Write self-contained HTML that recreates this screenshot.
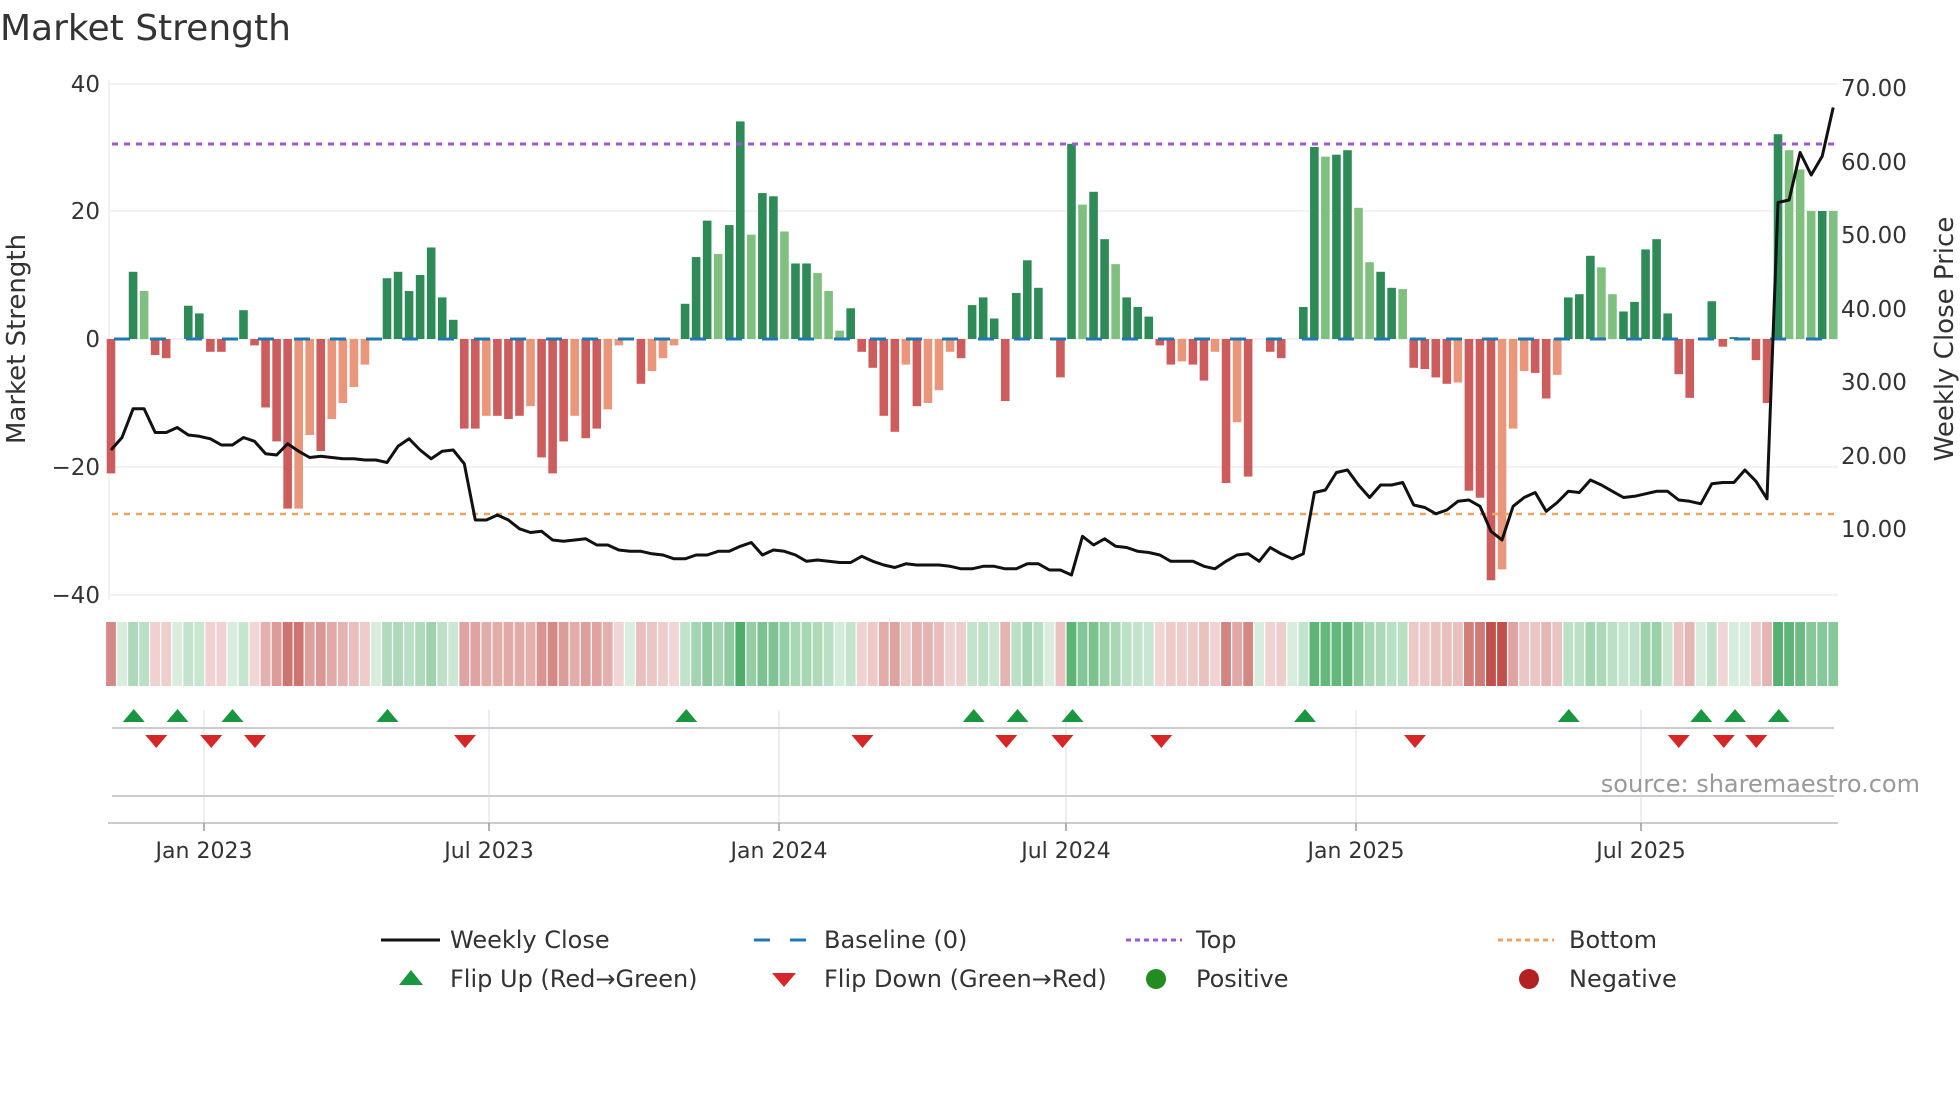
<!DOCTYPE html>
<html><head><meta charset="utf-8"><style>
html,body{margin:0;padding:0;background:#fff;width:1960px;height:1102px;overflow:hidden}
svg text{font-family:"DejaVu Sans","Liberation Sans",sans-serif;fill:#333}
</style></head><body>
<svg id="s" width="1960" height="1102" viewBox="0 0 1960 1102" xmlns="http://www.w3.org/2000/svg">
<text x="0" y="40" font-size="36">Market Strength</text>
<g stroke="#eeeeee" stroke-width="1.5">
<line x1="109" y1="84" x2="1838" y2="84"/><line x1="109" y1="211" x2="1838" y2="211"/>
<line x1="109" y1="339" x2="1838" y2="339"/><line x1="109" y1="467" x2="1838" y2="467"/>
<line x1="109" y1="595" x2="1838" y2="595"/>
</g>
<line x1="109" y1="80" x2="109" y2="600" stroke="#eee" stroke-width="1.5"/>
<g font-size="23" text-anchor="end">
<text x="100" y="92">40</text><text x="100" y="219">20</text><text x="100" y="347">0</text>
<text x="100" y="475">−20</text><text x="100" y="603">−40</text>
</g>
<g font-size="23">
<text x="1841" y="96">70.00</text><text x="1841" y="170">60.00</text><text x="1841" y="243">50.00</text>
<text x="1841" y="317">40.00</text><text x="1841" y="390">30.00</text><text x="1841" y="464">20.00</text>
<text x="1841" y="537">10.00</text>
</g>
<text font-size="26" text-anchor="middle" transform="translate(25,339) rotate(-90)">Market Strength</text>
<text font-size="26" text-anchor="middle" transform="translate(1953,339) rotate(-90)">Weekly Close Price</text>
<g id="bars"></g>
<line x1="114" y1="339" x2="1838" y2="339" stroke="#1f77b4" stroke-width="3" stroke-dasharray="16 20"/>
<line x1="112" y1="144" x2="1836" y2="144" stroke="#9b59d6" stroke-width="3" stroke-dasharray="6 6"/>
<line x1="112" y1="514" x2="1836" y2="514" stroke="#f0a35e" stroke-width="2.5" stroke-dasharray="6 6"/>
<polyline id="price" fill="none" stroke="#111" stroke-width="3" stroke-linejoin="round"/>
<g id="strip"></g>
<g stroke="#e8e8ee" stroke-width="1.5">
<line x1="204" y1="710" x2="204" y2="823"/><line x1="489" y1="710" x2="489" y2="823"/>
<line x1="779" y1="710" x2="779" y2="823"/><line x1="1066" y1="710" x2="1066" y2="823"/>
<line x1="1356" y1="710" x2="1356" y2="823"/><line x1="1641" y1="710" x2="1641" y2="823"/>
</g>
<line x1="112" y1="728" x2="1834" y2="728" stroke="#ccc" stroke-width="2"/>
<line x1="112" y1="796" x2="1834" y2="796" stroke="#ccc" stroke-width="2"/>
<line x1="108" y1="823" x2="1838" y2="823" stroke="#ccc" stroke-width="2"/>
<g stroke="#999" stroke-width="1.5">
<line x1="204" y1="823" x2="204" y2="831"/><line x1="489" y1="823" x2="489" y2="831"/>
<line x1="779" y1="823" x2="779" y2="831"/><line x1="1066" y1="823" x2="1066" y2="831"/>
<line x1="1356" y1="823" x2="1356" y2="831"/><line x1="1641" y1="823" x2="1641" y2="831"/>
</g>
<g id="flips"></g>
<text x="1920" y="792" font-size="24" text-anchor="end" style="fill:#999">source: sharemaestro.com</text>
<g font-size="22" text-anchor="middle">
<text x="204" y="858">Jan 2023</text><text x="489" y="858">Jul 2023</text><text x="779" y="858">Jan 2024</text>
<text x="1066" y="858">Jul 2024</text><text x="1356" y="858">Jan 2025</text><text x="1641" y="858">Jul 2025</text>
</g>
<g font-size="24">
<line x1="381" y1="940" x2="440" y2="940" stroke="#111" stroke-width="3"/>
<text x="450" y="948">Weekly Close</text>
<line x1="754" y1="940" x2="812" y2="940" stroke="#1f77b4" stroke-width="3" stroke-dasharray="16 20"/>
<text x="824" y="948">Baseline (0)</text>
<line x1="1126" y1="940" x2="1182" y2="940" stroke="#9b59d6" stroke-width="3" stroke-dasharray="5 4"/>
<text x="1196" y="948">Top</text>
<line x1="1498" y1="940" x2="1554" y2="940" stroke="#f0a35e" stroke-width="3" stroke-dasharray="5 4"/>
<text x="1569" y="948">Bottom</text>
<polygon points="399,985 411,970 423,985" fill="#1a9641"/>
<text x="450" y="987">Flip Up (Red→Green)</text>
<polygon points="772,973 796,973 784,987" fill="#d62728"/>
<text x="824" y="987">Flip Down (Green→Red)</text>
<circle cx="1156" cy="979" r="10" fill="#228b22"/>
<text x="1196" y="987">Positive</text>
<circle cx="1529" cy="979" r="10" fill="#b22222"/>
<text x="1569" y="987">Negative</text>
</g>
</svg>
<script>
var V=[-21,0,10.5,7.5,-2.5,-3,0,5.2,4,-2,-2,0,4.5,-1,-10.7,-16,-26.5,-26.5,-15,-17.5,-12.5,-10,-7.5,-4,0,9.5,10.5,7.5,10,14.3,6.5,3,
-14,-14,-12,-12,-12.5,-12,-10.5,-18.5,-21,-16,-12,-15.5,-14,-11,-1,0,-7,-5,-3,-1,5.5,12.8,18.5,13.3,17.8,34,16.3,22.8,22.3,16.8,11.8,11.8,10.3,7.5,1.3,4.8,
-2,-4.5,-12,-14.5,-4,-10.5,-10,-8,-2,-3,5.3,6.5,3.2,-9.7,7.2,12.3,8,0,-6,30.5,21,23,15.6,11.7,6.5,5,3.5,-1,-4,-3.5,-4,-6.5,-2,-22.5,-13,-21.5,0,-2,-3,0,
5,30,28.5,28.8,29.5,20.5,12,10.5,8,7.8,-4.5,-4.7,-6,-7,-6.8,-23.7,-24.8,-37.7,-36,-14,-5,-5.3,-9.3,-5.6,6.5,7,13,11.2,7,4.3,5.8,14,15.6,4,-5.5,-9.2,0,5.9,-1.2,0.3,0,-3.3,-10,32,29.5,26.5,20,20,20];
var L=[3,55,58,61,64,65,66,88,91,110,113,114,117,122,127,135,136,152,153,154,156];
var D={}; [17,18,20,21,22,23,34,38,42,45,46,49,50,51,72,74,75,76,97,100,102,122,126,127,128,131].forEach(function(i){D[i]=1});
var P=[360,350,327,327,346,346,342,348,349,351,356,356,350,353,363,364,355,361,366,365,366,367,367,368,368,370,357,351,360,367,361,360,371,416,416,412,416,423,426,425,432,433,432,431,436,436,440,441,441,443,444,447,447,444,444,441,441,437,434,444,440,441,444,449,448,449,450,450,445,449,452,454,451,452,452,452,453,455,455,453,453,455,455,451,451,456,456,460,429,436,431,437,438,441,442,444,449,449,449,453,455,449,444,443,449,438,443,447,443,394,392,378,376,388,398,388,388,386,404,406,411,408,401,400,405,425,432,405,398,394,409,402,393,394,384,388,393,398,397,395,393,393,400,401,403,387,386,386,376,385,399,162,160,122,140,125,86];
var ns="http://www.w3.org/2000/svg",b=document.getElementById('bars'),st=document.getElementById('strip'),pts=[];
function r(g,x,y,w,h,f){var e=document.createElementNS(ns,'rect');e.setAttribute('x',x);e.setAttribute('y',y);e.setAttribute('width',w);e.setAttribute('height',h);e.setAttribute('fill',f);g.appendChild(e);}
for(var i=0;i<V.length;i++){var v=V[i],cx=111+i*11.04,h=Math.abs(v)*6.4,f;
 if(v>=0){f=L.indexOf(i)>=0?'#80c07e':'#2e8b57';r(b,cx-4.3,339-h,8.6,h,f);}
 else{f=D[i]?'#e9967a':'#cd5c5c';r(b,cx-4.3,339,8.6,h,f);}
 var a=0.2+0.75*Math.min(1,Math.abs(v)/36);
 var c=v>=0?'rgba(60,165,90,'+a+')':'rgba(190,70,65,'+a+')';
 r(st,cx-4.9,622,9.8,64,c);
 if(i<P.length)pts.push(cx.toFixed(1)+','+(P[i]*1.25).toFixed(1));}
document.getElementById('price').setAttribute('points',pts.join(' '));
var fl=document.getElementById('flips'),U=[107,142,186,310,549,779,814,858,1044,1255,1361,1388,1423],Dn=[125,169,204,372,690,805,850,929,1132,1343,1379,1405];
U.forEach(function(x){var X=x*1.25,p=document.createElementNS(ns,'polygon');p.setAttribute('points',(X-11)+',722 '+X+',709 '+(X+11)+',722');p.setAttribute('fill','#1a9641');fl.appendChild(p);});
Dn.forEach(function(x){var X=x*1.25,p=document.createElementNS(ns,'polygon');p.setAttribute('points',(X-11)+',735 '+(X+11)+',735 '+X+',748');p.setAttribute('fill','#d62728');fl.appendChild(p);});
</script>
</body></html>
